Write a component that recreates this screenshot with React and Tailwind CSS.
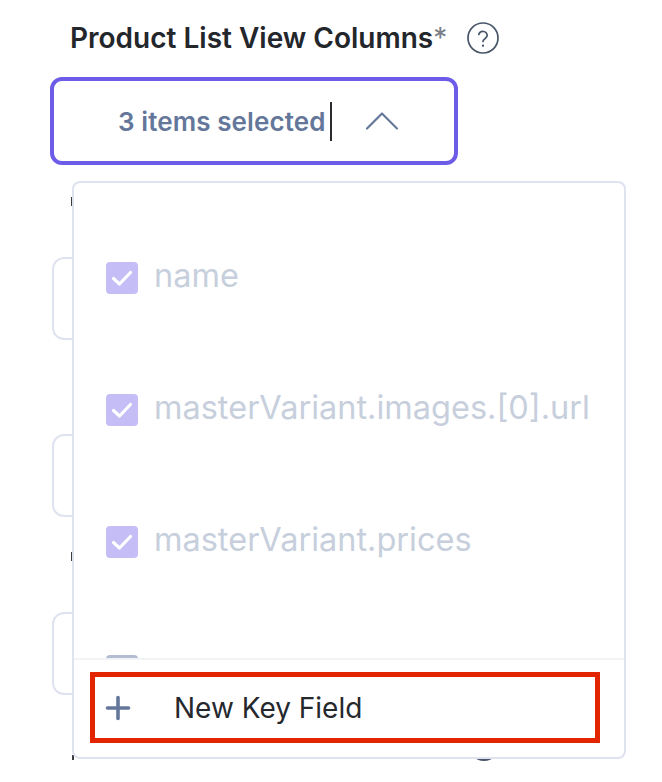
import { ChevronUp, Plus } from "lucide-react"

const columns = ["name", "masterVariant.images.[0].url", "masterVariant.prices"]

function CheckBox() {
  return (
    <span className="flex h-8 w-8 shrink-0 items-center justify-center rounded-[4px] bg-[#c4bdf6]">
      <svg viewBox="0 0 32 32" className="h-8 w-8" fill="none">
        <path d="M7.5 16.5 L13.5 22 L24.5 10.5" stroke="white" strokeWidth="3.2" strokeLinecap="round" strokeLinejoin="round" />
      </svg>
    </span>
  )
}

function HelpIcon() {
  return (
    <svg viewBox="0 0 32 32" className="h-8 w-8" fill="none" stroke="#475569" strokeWidth="1.7" strokeLinecap="round">
      <circle cx="16" cy="16" r="15" />
      <path d="M11.8 12.5a4.3 4.3 0 0 1 8.4 1c0 2.8-4.2 3.4-4.2 6" />
      <path d="M16 23.6v.2" strokeWidth="2.2" />
    </svg>
  )
}

export default function App() {
  return (
    <div className="relative h-[782px] w-[662px] overflow-hidden bg-white font-['Inter',sans-serif]">
      <div className="flex flex-col pl-[50px] pt-5">
        <div className="flex items-center gap-[20px] pl-[20px]">
          <span className="text-[28px] font-semibold leading-9 text-[#23262b]">
            Product List View Columns<span className="font-normal text-[#7a7f87]">*</span>
          </span>
          <HelpIcon />
        </div>

        <div className="mt-[21px] flex h-[88px] w-[408px] items-center rounded-[12px] border-4 border-[#6c5ce7] pl-[64px]">
          <span className="text-[26px] font-semibold tracking-[0.1px] text-[#64779b]">3 items selected</span>
          <span className="ml-[4px] h-[39px] w-[2px] bg-[#2b2b2f]" />
          <ChevronUp className="ml-[20px] h-[60px] w-[60px] text-[#64779b]" strokeWidth={0.85} />
        </div>

        {/* form fields behind the open dropdown, only their edges show */}
        <div className="ml-[21px] mt-[32px] h-[9px] w-[1px] bg-[#3a3d42]" />
        <div className="ml-[2px] mt-[51px] h-[83px] w-[100px] rounded-[12px] border-2 border-[#dfe3f0]" />
        <div className="ml-[2px] mt-[94px] h-[83px] w-[100px] rounded-[12px] border-2 border-[#dfe3f0]" />
        <div className="ml-[21px] mt-[35px] h-[9px] w-[1px] bg-[#3a3d42]" />
        <div className="ml-[2px] mt-[51px] h-[83px] w-[100px] rounded-[12px] border-2 border-[#dfe3f0]" />
        <div className="ml-[22px] mt-[60px] h-[5px] w-[2px] bg-[#3a3d42]" />
      </div>

      <div className="absolute left-[468px] top-[729px] h-[32px] w-[32px] rounded-full border-2 border-[#475569]" />

      <div className="absolute left-[72px] top-[181px] flex h-[578px] w-[554px] flex-col overflow-hidden rounded-[8px] border-2 border-[#dfe3f0] bg-white">
        <div className="h-[475px] shrink-0 overflow-hidden pl-[32px] pt-[79px]">
          <div className="flex flex-col gap-[100px]">
            {columns.map((col) => (
              <label key={col} className="flex h-8 items-center gap-[16px]">
                <CheckBox />
                <span className="-mt-[5px] text-[32.5px] leading-8 text-[#c7cfdd]">{col}</span>
              </label>
            ))}
          </div>
          <div className="mt-[97px] h-8 w-8 rounded-[4px] bg-[#b3bdd2]" />
        </div>
        <div className="flex-1 border-t-2 border-[#f2f3f5] px-[16px] pt-[12px]">
          <button className="flex h-[71px] w-[510px] items-center border-[5px] border-[#e32400] pl-[5px]">
            <Plus className="h-9 w-9 text-[#64779b]" strokeWidth={2.4} />
            <span className="ml-[38px] text-[28px] text-[#25282c]">New Key Field</span>
          </button>
        </div>
      </div>
    </div>
  )
}
